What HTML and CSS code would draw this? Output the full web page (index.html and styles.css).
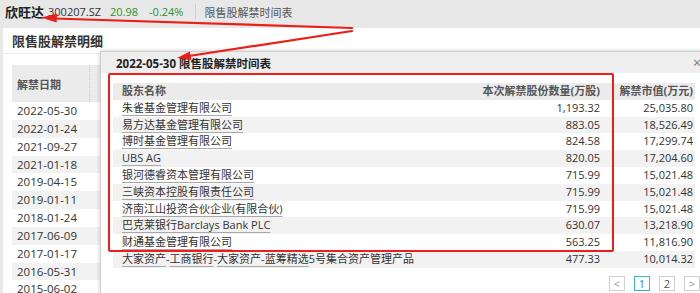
FILE: index.html
```html
<!DOCTYPE html>
<html lang="zh">
<head>
<meta charset="utf-8">
<link rel="stylesheet" href="styles.css">
</head>
<body>
<div class="topbar">
  <span class="name">欣旺达</span>
  <span class="code">300207.SZ</span>
  <span class="price">20.98</span>
  <span class="chg">-0.24%</span>
  <span class="sep"></span>
  <span class="crumb">限售股解禁时间表</span>
</div>
<div class="panel">
  <div class="panel-title">限售股解禁明细</div>
  <div class="main-table">
    <div class="mt-head"><div class="mt-hcell">解禁日期</div></div>
    <div class="mt-row">2022-05-30</div>
    <div class="mt-row">2022-01-24</div>
    <div class="mt-row">2021-09-27</div>
    <div class="mt-row">2021-01-18</div>
    <div class="mt-row">2019-04-15</div>
    <div class="mt-row">2019-01-11</div>
    <div class="mt-row">2018-01-24</div>
    <div class="mt-row">2017-06-09</div>
    <div class="mt-row">2017-01-17</div>
    <div class="mt-row">2016-05-31</div>
    <div class="mt-row">2015-06-02</div>
  </div>
</div>

<div class="popup">
  <div class="popup-title"><span>2022-05-30 限售股解禁时间表</span><span class="close">×</span></div>
  <div class="popup-body">
    <div class="pt">
      <div class="pt-row pt-head"><div class="c-name">股东名称</div><div class="c-qty">本次解禁股份数量(万股)</div><div class="c-val">解禁市值(万元)</div></div>
      <div class="pt-row"><div class="c-name"><span class="lnk">朱雀基金管理有限公司</span></div><div class="c-qty">1,193.32</div><div class="c-val">25,035.80</div></div>
      <div class="pt-row"><div class="c-name"><span class="lnk">易方达基金管理有限公司</span></div><div class="c-qty">883.05</div><div class="c-val">18,526.49</div></div>
      <div class="pt-row"><div class="c-name"><span class="lnk">博时基金管理有限公司</span></div><div class="c-qty">824.58</div><div class="c-val">17,299.74</div></div>
      <div class="pt-row"><div class="c-name"><span class="lnk">UBS AG</span></div><div class="c-qty">820.05</div><div class="c-val">17,204.60</div></div>
      <div class="pt-row"><div class="c-name"><span class="lnk">银河德睿资本管理有限公司</span></div><div class="c-qty">715.99</div><div class="c-val">15,021.48</div></div>
      <div class="pt-row"><div class="c-name"><span class="lnk">三峡资本控股有限责任公司</span></div><div class="c-qty">715.99</div><div class="c-val">15,021.48</div></div>
      <div class="pt-row"><div class="c-name"><span class="lnk">济南江山投资合伙企业(有限合伙)</span></div><div class="c-qty">715.99</div><div class="c-val">15,021.48</div></div>
      <div class="pt-row"><div class="c-name"><span class="lnk">巴克莱银行Barclays Bank PLC</span></div><div class="c-qty">630.07</div><div class="c-val">13,218.90</div></div>
      <div class="pt-row"><div class="c-name"><span class="lnk">财通基金管理有限公司</span></div><div class="c-qty">563.25</div><div class="c-val">11,816.90</div></div>
      <div class="pt-row"><div class="c-name"><span class="lnk">大家资产</span>-<span class="lnk">工商银行</span>-<span class="lnk">大家资产-蓝筹精选</span>5号集合资产管理产品</div><div class="c-qty">477.33</div><div class="c-val">10,014.32</div></div>
    </div>
    <div class="pager">
      <span class="pg pg-arrow">&lt;</span>
      <span class="pg pg-active">1</span>
      <span class="pg">2</span>
      <span class="pg pg-arrow">&gt;</span>
    </div>
  </div>
</div>

<div class="redbox"></div>

<svg class="arrows" width="700" height="293" viewBox="0 0 700 293">
  <line x1="352" y1="28" x2="54" y2="18.5" stroke="#ea1f17" stroke-width="2.2" stroke-linecap="round"/>
  <polygon points="41,17.5 57,13.8 56.6,22.6" fill="#ea1f17"/>
  <line x1="352" y1="31" x2="189" y2="56" stroke="#ea1f17" stroke-width="2.2" stroke-linecap="round"/>
  <polygon points="177,58 191.4,60 189.8,51.6" fill="#ea1f17"/>
</svg>
</body>
</html>
```

FILE: styles.css
```css
* { box-sizing: border-box; }
html, body {
  margin: 0;
  padding: 0;
}
body {
  width: 700px;
  height: 293px;
  overflow: hidden;
  background: #e8e8e8;
  font-family: "Open Sans", "Noto Sans CJK SC", sans-serif;
  font-size: 11px;
  color: #333;
  position: relative;
}

/* top bar */
.topbar {
  height: 28px;
  display: flex;
  align-items: center;
  padding: 0 5px 5px;
  white-space: nowrap;
}
.topbar .name {
  font-size: 13px;
  font-weight: bold;
  color: #222;
}
.topbar .code { margin-left: 4px; color: #333; }
.topbar .price { margin-left: 9px; color: #25962f; }
.topbar .chg { margin-left: 11px; color: #25962f; }
.topbar .sep {
  width: 1px;
  height: 15px;
  background: #cfcfcf;
  margin-left: 12px;
}
.topbar .crumb { margin-left: 8px; color: #555; }

/* main panel */
.panel {
  margin-left: 3px;
  background: #fff;
  height: 265px;
  overflow: hidden;
}
.panel-title {
  height: 26px;
  padding-left: 9px;
  display: flex;
  align-items: center;
  font-size: 13px;
  font-weight: bold;
  color: #333;
  border-bottom: 1px solid #ececec;
}
.main-table {
  margin: 11px 0 0 9px;
}
.mt-head {
  height: 37px;
  background: #ebebeb;
  display: flex;
}
.mt-hcell {
  width: 78px;
  padding-left: 5px;
  display: flex;
  align-items: center;
  border-right: 1px dotted #c8c8c8;
  font-weight: bold;
  color: #555;
}
.mt-row {
  height: 17.85px;
  line-height: 17.85px;
  padding-left: 5px;
  font-size: 11.5px;
  color: #333;
}
.mt-row:nth-child(odd) { background: #f2f2f2; }

/* popup */
.popup {
  position: absolute;
  left: 100px;
  top: 51px;
  width: 606px;
  height: 250px;
  background: #fff;
  border: 1px solid #cfcfcf;
  box-shadow: 0 0 4px rgba(0,0,0,0.22);
}
.popup-title {
  height: 21px;
  background: #eeeeee;
  display: flex;
  align-items: center;
  justify-content: space-between;
  padding: 0 4px 0 15px;
  font-size: 11.5px;
  font-weight: bold;
  color: #222;
}
.popup-title .close {
  font-weight: normal;
  font-size: 14px;
  color: #777;
}
.popup-body {
  padding: 10px 10px 0 12px;
}
.pt-row {
  display: grid;
  grid-template-columns: 1fr 150px 95px;
  height: 16.8px;
  line-height: 16.8px;
  white-space: nowrap;
}
.pt-row:nth-child(odd) { background: #f2f2f2; }
.pt-head { background: #ebebeb !important; font-weight: bold; color: #555; }
.c-name { padding-left: 9px; overflow: hidden; }
.c-qty { text-align: right; }
.c-val { text-align: right; padding-right: 2px; }
.lnk {
  text-decoration: underline;
  text-decoration-color: #a8a8a8;
  text-underline-offset: 3px;
}
.pager {
  display: flex;
  justify-content: flex-end;
  gap: 9px;
  margin: 8px -5px 0 0;
}
.pg {
  width: 16px;
  height: 15px;
  border: 1px solid #d0d0d0;
  display: flex;
  align-items: center;
  justify-content: center;
  font-size: 11px;
  color: #555;
}
.pg-arrow { color: #999; }
.pg-active { border-color: #35b4d6; color: #2a8fb0; }

/* annotations */
.redbox {
  position: absolute;
  left: 108px;
  top: 73px;
  width: 506px;
  height: 179px;
  border: 2px solid #f01d1d;
  border-radius: 2px;
}
.arrows {
  position: absolute;
  left: 0;
  top: 0;
  pointer-events: none;
}
```
